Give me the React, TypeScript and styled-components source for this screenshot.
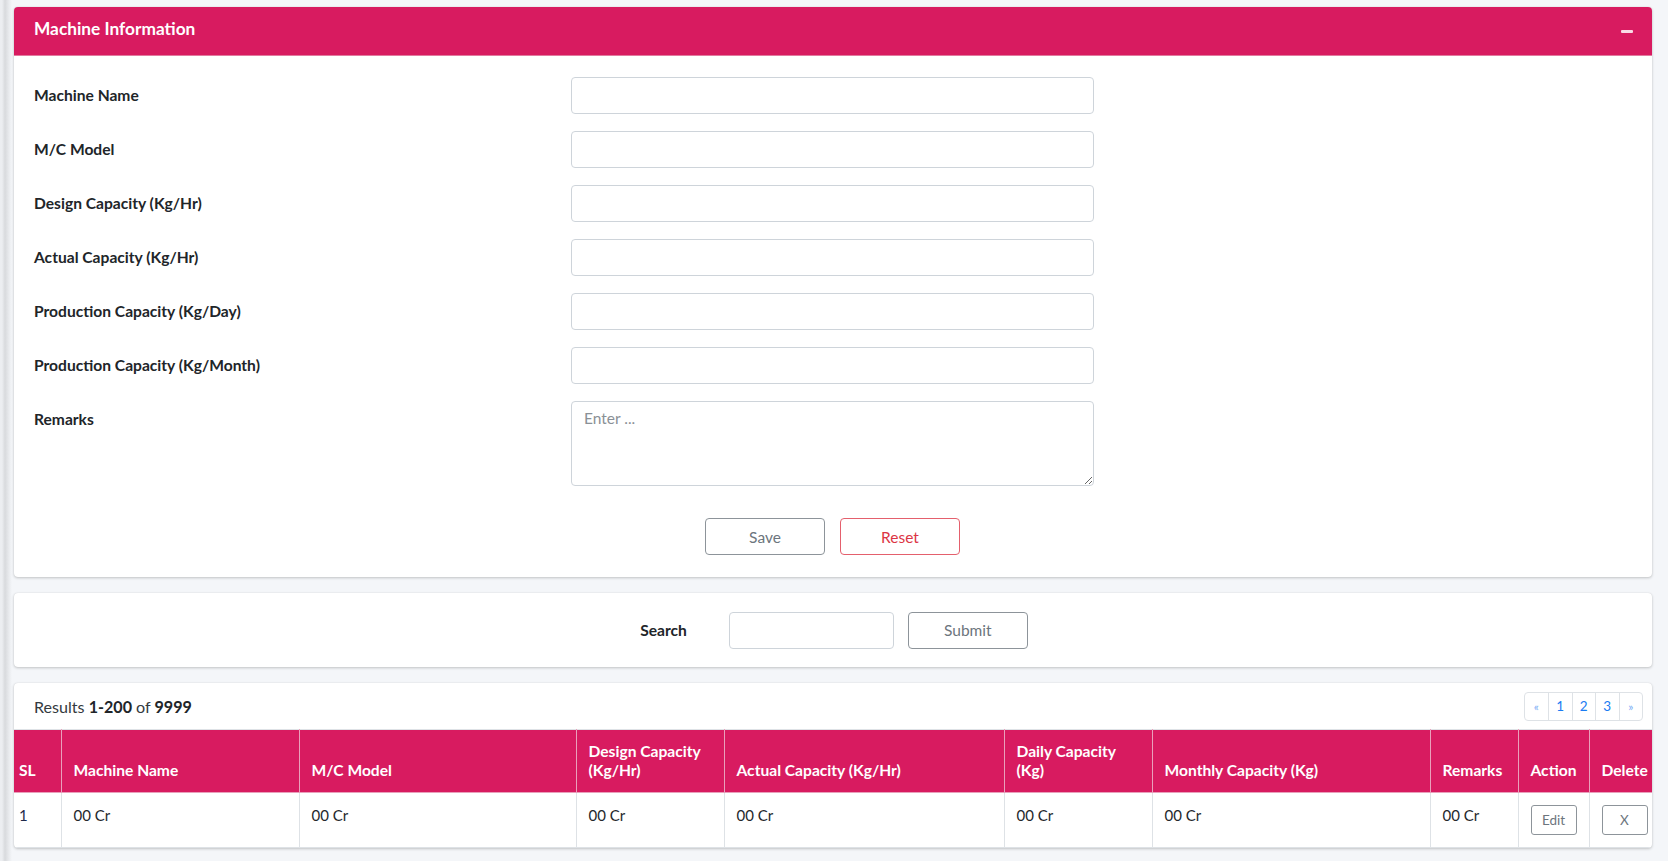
import { FC, Fragment } from 'react';
import styled, { createGlobalStyle } from 'styled-components';

const GlobalStyle = createGlobalStyle`
  * { box-sizing: border-box; }
  html, body { margin: 0; padding: 0; }
  body {
    font-family: Lato, "Noto Sans", sans-serif;
    color: #212529;
    background: #f4f6f9;
  }
`;

const Page = styled.div`
  min-height: 861px;
  padding: 7px 16px 0 14px;
  background: linear-gradient(to right, #eceef1 0, #eceef1 2px, #d8dadd 5px, #e9ebee 9px, #f4f6f9 12px);
  display: flex;
  flex-direction: column;
  gap: 16px;
`;

const Card = styled.div`
  background: #fff;
  border-radius: 4px;
  box-shadow: 0 0 1px rgba(0, 0, 0, 0.125), 0 1px 3px rgba(0, 0, 0, 0.2);
  overflow: hidden;
`;

const CardHeader = styled.div`
  height: 49px;
  background: #d81b60;
  color: #fff;
  display: flex;
  align-items: center;
  justify-content: space-between;
  padding: 0 19px 0 20px;
  border-bottom: 1px solid #e27a9f;
`;

const Title = styled.div`
  font-size: 17.3px;
  font-weight: 700;
  margin-top: -5px;
`;

const Collapse = styled.span`
  width: 12px;
  height: 3px;
  border-radius: 1px;
  background: #f9dbe6;
`;

const FormBody = styled.div`
  padding: 21px 20px 22px;
`;

const Fields = styled.div`
  display: grid;
  grid-template-columns: 537px 523px;
  row-gap: 17px;
`;

const Label = styled.label`
  font-size: 15.6px;
  font-weight: 700;
  line-height: 37px;
  height: 37px;
  color: #212529;
`;

const TextInput = styled.input<{ $width?: number }>`
  width: ${(p) => (p.$width ? `${p.$width}px` : '100%')};
  height: 37px;
  border: 1px solid #ced4da;
  border-radius: 4px;
  padding: 6px 12px;
  font-family: inherit;
  font-size: 15px;
  outline: none;
`;

const TextArea = styled.textarea`
  width: 100%;
  height: 85px;
  border: 1px solid #ced4da;
  border-radius: 4px;
  padding: 7px 12px;
  font-family: inherit;
  font-size: 15.5px;
  resize: vertical;
  outline: none;
  display: block;
  &::placeholder { color: #8a9096; }
`;

const Actions = styled.div`
  display: grid;
  grid-template-columns: 537px 523px;
  margin-top: 32px;
`;

const ButtonRow = styled.div`
  grid-column: 2;
  display: flex;
  justify-content: center;
  gap: 15px;
`;

const Button = styled.button<{ $tone?: 'secondary' | 'danger'; $small?: boolean; $gapLeft?: number }>`
  width: ${(p) => (p.$small ? '46px' : '120px')};
  height: ${(p) => (p.$small ? '30px' : '37px')};
  margin-left: ${(p) => p.$gapLeft ?? 0}px;
  background: #fff;
  border: 1px solid ${(p) => (p.$tone === 'danger' ? '#e4606d' : '#8d949a')};
  color: ${(p) => (p.$tone === 'danger' ? '#dc3545' : '#6c757d')};
  border-radius: ${(p) => (p.$small ? '3px' : '4px')};
  font-family: inherit;
  font-size: ${(p) => (p.$small ? '13.5px' : '15.5px')};
  padding: 0;
  cursor: pointer;
`;

const SearchBar = styled.div`
  height: 74px;
  display: flex;
  align-items: center;
  justify-content: center;
  padding-left: 2px;
`;

const SearchLabel = styled.span`
  font-size: 15.6px;
  font-weight: 700;
  margin-right: 42px;
`;

const ResultsBar = styled.div`
  height: 46px;
  display: flex;
  align-items: center;
  justify-content: space-between;
  padding: 0 9px 0 20px;
`;

const Results = styled.div`
  font-size: 16.1px;
  color: #343a40;
  b { font-weight: 700; color: #212529; }
`;

const Pager = styled.div`
  display: flex;
  height: 29px;
  border: 1px solid #dee2e6;
  border-radius: 4px;
`;

const PageItem = styled.a<{ $arrow?: boolean }>`
  width: 23.5px;
  display: flex;
  align-items: center;
  justify-content: center;
  font-size: ${(p) => (p.$arrow ? '12px' : '13.5px')};
  color: ${(p) => (p.$arrow ? '#7aaef5' : '#1a7cf2')};
  & + & { border-left: 1px solid #dee2e6; }
`;

const Table = styled.table`
  width: 100%;
  border-collapse: collapse;
  table-layout: fixed;
  font-size: 15px;
`;

const Th = styled.th<{ $pad?: number }>`
  background: #d81b60;
  color: #fff;
  font-size: 15.6px;
  font-weight: 700;
  text-align: left;
  vertical-align: bottom;
  line-height: 19px;
  padding: 12px ${(p) => p.$pad ?? 12}px;
  border: 1px solid #e9a0bb;
  border-top-color: #dee2e6;
  &:first-child { border-left: none; }
  &:last-child { border-right: none; }
`;

const Td = styled.td<{ $pad?: number }>`
  vertical-align: top;
  line-height: 21px;
  padding: 12px ${(p) => p.$pad ?? 12}px;
  border: 1px solid #dee2e6;
  color: #24282c;
  &:first-child { border-left: none; color: #1e2a4a; }
  &:last-child { border-right: none; }
`;

const columns: { label: string; width: number; pad?: number }[] = [
  { label: 'SL', width: 47, pad: 5 },
  { label: 'Machine Name', width: 238 },
  { label: 'M/C Model', width: 277 },
  { label: 'Design Capacity (Kg/Hr)', width: 148 },
  { label: 'Actual Capacity (Kg/Hr)', width: 280 },
  { label: 'Daily Capacity (Kg)', width: 148 },
  { label: 'Monthly Capacity (Kg)', width: 278 },
  { label: 'Remarks', width: 88 },
  { label: 'Action', width: 71 },
  { label: 'Delete', width: 63 },
];

const fields = [
  'Machine Name',
  'M/C Model',
  'Design Capacity (Kg/Hr)',
  'Actual Capacity (Kg/Hr)',
  'Production Capacity (Kg/Day)',
  'Production Capacity (Kg/Month)',
];

const App: FC = () => {
  return (
    <Page>
      <GlobalStyle />
      <Card>
        <CardHeader>
          <Title>Machine Information</Title>
          <Collapse />
        </CardHeader>
        <FormBody>
          <Fields>
            {fields.map((f) => (
              <Fragment key={f}>
                <Label>{f}</Label>
                <TextInput />
              </Fragment>
            ))}
            <Label>Remarks</Label>
            <TextArea placeholder="Enter ..." />
          </Fields>
          <Actions>
            <ButtonRow>
              <Button $tone="secondary">Save</Button>
              <Button $tone="danger">Reset</Button>
            </ButtonRow>
          </Actions>
        </FormBody>
      </Card>

      <Card>
        <SearchBar>
          <SearchLabel>Search</SearchLabel>
          <TextInput $width={165} />
          <Button $tone="secondary" $gapLeft={14}>
            Submit
          </Button>
        </SearchBar>
      </Card>

      <Card>
        <ResultsBar>
          <Results>
            Results <b>1-200</b> of <b>9999</b>
          </Results>
          <Pager>
            <PageItem $arrow>«</PageItem>
            <PageItem>1</PageItem>
            <PageItem>2</PageItem>
            <PageItem>3</PageItem>
            <PageItem $arrow>»</PageItem>
          </Pager>
        </ResultsBar>
        <Table>
          <colgroup>
            {columns.map((c) => (
              <col key={c.label} style={{ width: c.width }} />
            ))}
          </colgroup>
          <thead>
            <tr>
              {columns.map((c) => (
                <Th key={c.label} $pad={c.pad}>
                  {c.label}
                </Th>
              ))}
            </tr>
          </thead>
          <tbody>
            <tr>
              <Td $pad={5}>1</Td>
              <Td>00 Cr</Td>
              <Td>00 Cr</Td>
              <Td>00 Cr</Td>
              <Td>00 Cr</Td>
              <Td>00 Cr</Td>
              <Td>00 Cr</Td>
              <Td>00 Cr</Td>
              <Td>
                <Button $small>Edit</Button>
              </Td>
              <Td>
                <Button $small>X</Button>
              </Td>
            </tr>
          </tbody>
        </Table>
      </Card>
    </Page>
  );
};

export default App;
